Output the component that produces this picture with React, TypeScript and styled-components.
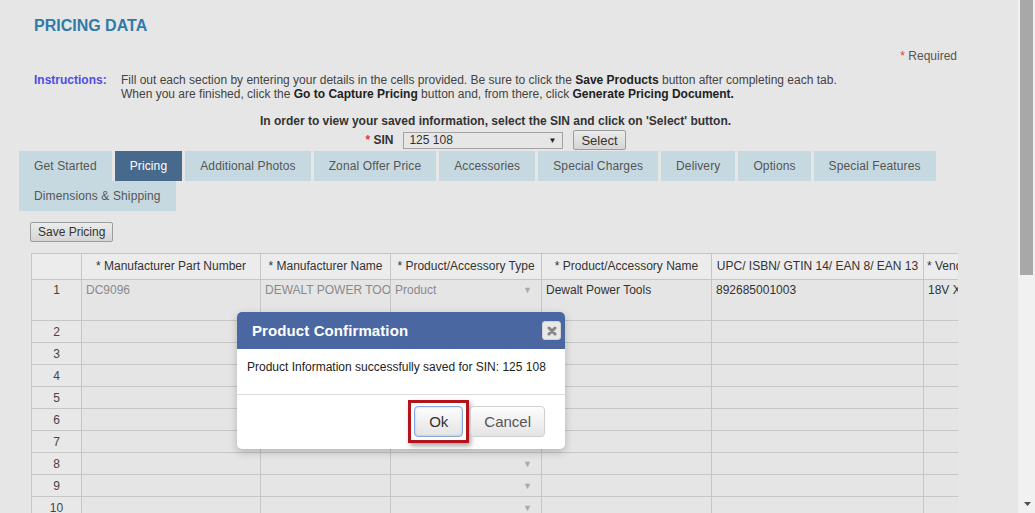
import React from "react";
import styled, { createGlobalStyle } from "styled-components";

const GlobalStyle = createGlobalStyle`
  html, body { margin: 0; padding: 0; height: 100%; overflow: hidden; background: #e6e6e6; }
  body { font-family: "Liberation Sans", Arial, Helvetica, sans-serif; font-size: 12px; color: #333; }
  * { box-sizing: border-box; }
`;

const Viewport = styled.div`
  position: relative;
  display: flex;
  width: 100vw;
  height: 100vh;
`;

const Main = styled.main`
  flex: 1;
  min-width: 0;
  overflow: hidden;
`;

const Content = styled.div`
  padding: 17px 61px 0 34px;
`;

const Title = styled.h1`
  margin: 0;
  font-size: 16px;
  line-height: 18px;
  font-weight: bold;
  color: #307aa8;
`;

const Star = styled.span`
  color: #e23a3a;
`;

const RequiredNote = styled.div`
  margin-top: 14px;
  text-align: right;
  line-height: 14px;
  color: #555;
`;

const Instructions = styled.div`
  display: grid;
  grid-template-columns: 87px 1fr;
  margin-top: 10px;
  line-height: 14px;
  color: #444;
  b { color: #222; }
`;

const InstructionsLabel = styled.span`
  font-weight: bold;
  color: #4d4de6;
`;

const SinPrompt = styled.div`
  margin-top: 13px;
  text-align: center;
  font-weight: bold;
  line-height: 14px;
  color: #333;
`;

const SinRow = styled.div`
  display: flex;
  justify-content: center;
  align-items: center;
  gap: 10px;
  height: 20px;
  margin-top: 2px;
`;

const SinLabel = styled.span`
  font-weight: bold;
  color: #333;
`;

const FakeSelect = styled.div`
  display: flex;
  align-items: center;
  justify-content: space-between;
  width: 160px;
  height: 17px;
  padding: 0 6px 0 5px;
  border: 1px solid #a3a3a3;
  color: #333;
  font-size: 12px;
`;

const SelectCaret = styled.span`
  font-size: 8px;
  color: #222;
`;

const GreyButton = styled.button<{ $size?: number }>`
  height: 20px;
  padding: 0 7px;
  font-family: inherit;
  font-size: ${(p) => p.$size ?? 12}px;
  color: #333;
  background: linear-gradient(#ebebeb, #d5d5d5);
  border: 1px solid #9d9d9d;
  border-radius: 2px;
`;

const TabBar = styled.nav`
  display: flex;
  flex-wrap: wrap;
  column-gap: 3px;
  margin: 1px 0 0 -15px;
`;

const Tab = styled.div<{ $active?: boolean }>`
  height: 30px;
  line-height: 30px;
  padding: 0 15px;
  letter-spacing: 0.12px;
  background: ${(p) => (p.$active ? "#47698c" : "#c6d9e1")};
  color: ${(p) => (p.$active ? "#fff" : "#555")};
  white-space: nowrap;
`;

const SaveRow = styled.div`
  margin: 11px 0 0 -4px;
`;

const TableWrap = styled.div`
  margin: 11px 0 0 -3px;
  width: 927px;
  overflow: hidden;
`;

const Grid = styled.div`
  display: grid;
  width: max-content;
  grid-template-columns: 49px 178px 129px 150px 169px 211px max-content;
  grid-template-rows: 25px 40px;
  grid-auto-rows: 21px;
  gap: 1px;
  padding: 1px;
  background: #c6c6c6;
`;

const HeadCell = styled.div`
  display: flex;
  align-items: center;
  justify-content: center;
  padding: 0 3px 1px;
  background: #ececec;
  color: #333;
  white-space: nowrap;
  overflow: hidden;
`;

const NumCell = styled.div<{ $top?: boolean }>`
  display: flex;
  justify-content: center;
  align-items: ${(p) => (p.$top ? "flex-start" : "center")};
  padding-top: ${(p) => (p.$top ? "3px" : "0")};
  line-height: 14px;
  background: #e8e8e8;
  color: #444;
`;

const Cell = styled.div<{ $muted?: boolean; $top?: boolean }>`
  display: flex;
  align-items: ${(p) => (p.$top ? "flex-start" : "center")};
  justify-content: space-between;
  padding: ${(p) => (p.$top ? "3px 4px 0" : "0 4px")};
  line-height: 14px;
  background: #e5e5e5;
  color: ${(p) => (p.$muted ? "#8a8a8a" : "#333")};
  white-space: nowrap;
  overflow: hidden;
`;

const DropCaret = styled.span`
  font-size: 9px;
  color: #a9a9a9;
  margin-right: 5px;
`;

const Scrollbar = styled.div`
  flex: none;
  width: 17px;
  display: flex;
  flex-direction: column;
  justify-content: space-between;
  background: #f1f1f1;
`;

const Thumb = styled.div`
  margin-left: 2px;
  width: 13px;
  height: 275px;
  background: #a8a8a8;
`;

const ArrowBox = styled.div`
  display: flex;
  justify-content: center;
  padding: 0 0 7px 2px;
`;

const Modal = styled.section`
  position: absolute;
  left: 237px;
  top: 312px;
  width: 328px;
  background: #fff;
  border-radius: 5px;
  box-shadow: 0 3px 9px rgba(0, 0, 0, 0.22);
`;

const ModalHeader = styled.header`
  display: flex;
  align-items: center;
  justify-content: space-between;
  height: 37px;
  padding: 0 4px 0 15px;
  background: #4a67a1;
  border-radius: 5px 5px 0 0;
`;

const ModalTitle = styled.h2`
  margin: 0;
  font-size: 15px;
  font-weight: bold;
  letter-spacing: 0.1px;
  color: #fff;
`;

const CloseButton = styled.button`
  display: flex;
  align-items: center;
  justify-content: center;
  width: 19px;
  height: 19px;
  padding: 0;
  background: #e8e8e8;
  border: 1px solid #d2d2d2;
  border-radius: 3px;
`;

const ModalBody = styled.div`
  padding: 11px 10px 20px;
  line-height: 14px;
  color: #222;
`;

const ModalFooter = styled.footer`
  display: flex;
  justify-content: flex-end;
  align-items: center;
  gap: 1px;
  padding: 11px 20px 12px;
  border-top: 1px solid #dcdcdc;
`;

const Highlight = styled.span`
  display: inline-flex;
  margin: -6px 0;
  padding: 3px;
  border: 3px solid #b3141c;
  box-shadow: 2px 3px 5px rgba(0, 0, 0, 0.35);
`;

const DialogButton = styled.button<{ $primary?: boolean }>`
  height: 31px;
  padding: 0 ${(p) => (p.$primary ? 14 : 13)}px;
  font-family: inherit;
  font-size: 15px;
  color: ${(p) => (p.$primary ? "#333" : "#555")};
  background: linear-gradient(#fdfdfd, #e4e4e4);
  border: 1px solid ${(p) => (p.$primary ? "#86a9da" : "#cfcfcf")};
  border-radius: 4px;
  box-shadow: ${(p) => (p.$primary ? "inset 0 0 2px rgba(90,130,200,.5)" : "none")};
`;

const tabs = [
  "Get Started",
  "Pricing",
  "Additional Photos",
  "Zonal Offer Price",
  "Accessories",
  "Special Charges",
  "Delivery",
  "Options",
  "Special Features",
  "Dimensions & Shipping",
];

const headers = [
  "",
  "* Manufacturer Part Number",
  "* Manufacturer Name",
  "* Product/Accessory Type",
  "* Product/Accessory Name",
  "UPC/ ISBN/ GTIN 14/ EAN 8/ EAN 13",
  "* Vendor Part Number",
];

export default function App() {
  const rows = Array.from({ length: 10 }, (_, i) => i + 1);
  return (
    <>
      <GlobalStyle />
      <Viewport>
        <Main>
          <Content>
            <Title>PRICING DATA</Title>
            <RequiredNote>
              <Star>*</Star> Required
            </RequiredNote>
            <Instructions>
              <InstructionsLabel>Instructions:</InstructionsLabel>
              <span>
                Fill out each section by entering your details in the cells provided. Be sure to click the{" "}
                <b>Save Products</b> button after completing each tab.
                <br />
                When you are finished, click the <b>Go to Capture Pricing</b> button and, from there, click{" "}
                <b>Generate Pricing Document.</b>
              </span>
            </Instructions>
            <SinPrompt>In order to view your saved information, select the SIN and click on 'Select' button.</SinPrompt>
            <SinRow>
              <SinLabel>
                <Star>*</Star> SIN
              </SinLabel>
              <FakeSelect>
                <span>125 108</span>
                <SelectCaret>▼</SelectCaret>
              </FakeSelect>
              <GreyButton $size={13}>Select</GreyButton>
            </SinRow>
            <TabBar>
              {tabs.map((t) => (
                <Tab key={t} $active={t === "Pricing"}>
                  {t}
                </Tab>
              ))}
            </TabBar>
            <SaveRow>
              <GreyButton>Save Pricing</GreyButton>
            </SaveRow>
            <TableWrap>
              <Grid>
                {headers.map((h, i) => (
                  <HeadCell key={i}>{h}</HeadCell>
                ))}
                {rows.map((r) => {
                  const first = r === 1;
                  return (
                    <React.Fragment key={r}>
                      <NumCell $top={first}>{r}</NumCell>
                      <Cell $top={first} $muted>{first ? "DC9096" : ""}</Cell>
                      <Cell $top={first} $muted>{first ? "DEWALT POWER TOOLS" : ""}</Cell>
                      <Cell $top={first} $muted>
                        <span>{first ? "Product" : ""}</span>
                        <DropCaret>▼</DropCaret>
                      </Cell>
                      <Cell $top={first}>{first ? "Dewalt Power Tools" : ""}</Cell>
                      <Cell $top={first}>{first ? "892685001003" : ""}</Cell>
                      <Cell $top={first}>{first ? "18V XR Lithium" : ""}</Cell>
                    </React.Fragment>
                  );
                })}
              </Grid>
            </TableWrap>
          </Content>
        </Main>
        <Scrollbar>
          <Thumb />
          <ArrowBox>
            <svg width="7" height="4" viewBox="0 0 7 4">
              <path d="M0 0h7L3.5 4z" fill="#505050" />
            </svg>
          </ArrowBox>
        </Scrollbar>
        <Modal>
          <ModalHeader>
            <ModalTitle>Product Confirmation</ModalTitle>
            <CloseButton aria-label="Close">
              <svg width="10" height="10" viewBox="0 0 10 10">
                <path d="M2 2l6 6M8 2l-6 6" stroke="#858585" strokeWidth="3" strokeLinecap="round" />
              </svg>
            </CloseButton>
          </ModalHeader>
          <ModalBody>Product Information successfully saved for SIN: 125 108</ModalBody>
          <ModalFooter>
            <Highlight>
              <DialogButton $primary>Ok</DialogButton>
            </Highlight>
            <DialogButton>Cancel</DialogButton>
          </ModalFooter>
        </Modal>
      </Viewport>
    </>
  );
}
